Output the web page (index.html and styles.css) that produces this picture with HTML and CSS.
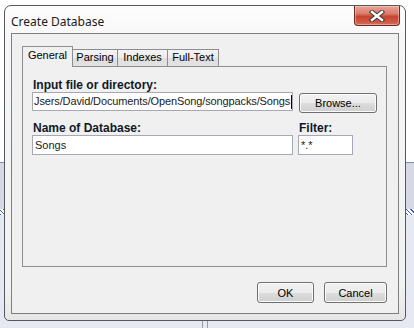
FILE: index.html
```html
<!DOCTYPE html>
<html lang="en">
<head>
    <meta charset="UTF-8">
    <meta name="viewport" content="width=device-width, initial-scale=1.0">
    <title>Create Database</title>
    <link rel="stylesheet" href="styles.css">
</head>
<body>
    <div class="window">
        <div class="titlebar">
            <span class="title">Create Database</span>
            <button class="close-btn" aria-label="Close">
                <svg width="16" height="12" viewBox="0 0 16 12">
                    <path d="M3 2 L13 10 M13 2 L3 10" stroke="#3c3c3c" stroke-width="4.4" stroke-linecap="square" fill="none"/>
                    <path d="M3 2 L13 10 M13 2 L3 10" stroke="#ffffff" stroke-width="2.4" stroke-linecap="square" fill="none"/>
                </svg>
            </button>
        </div>

        <div class="client">
            <div class="tabs">
                <div class="tab active">General</div>
                <div class="tab tab-parsing">Parsing</div>
                <div class="tab tab-indexes">Indexes</div>
                <div class="tab tab-fulltext">Full-Text</div>
            </div>

            <div class="panel">
                <div class="form">
                    <label class="lbl lbl-wide">Input file or directory:</label>
                    <div class="field field-path">
                        <span class="field-text">Jsers/David/Documents/OpenSong/songpacks/Songs</span><span class="caret"></span>
                    </div>
                    <button class="btn btn-browse">Browse...</button>

                    <label class="lbl lbl-name">Name of Database:</label>
                    <label class="lbl lbl-name">Filter:</label>
                    <div class="field">Songs</div>
                    <div class="field field-filter">*.*</div>
                </div>
            </div>

            <div class="actions">
                <button class="btn btn-ok">OK</button>
                <button class="btn btn-cancel">Cancel</button>
            </div>
        </div>
    </div>
</body>
</html>
```

FILE: styles.css
```css
* {
    margin: 0;
    padding: 0;
    box-sizing: border-box;
}

body {
    width: 414px;
    height: 328px;
    overflow: hidden;
    font-family: 'Liberation Sans', Arial, sans-serif;
    font-size: 11px;
    color: #000;
    background:
        linear-gradient(to right, transparent 202px, #9a9ca4 202px 203px, transparent 203px 207px, #9a9ca4 207px 208px, transparent 208px) 0 320px / 100% 8px no-repeat,
        repeating-linear-gradient(45deg, #3a55c4 0 1px, #ffffff 1px 3px) 0 209px / 100% 6px no-repeat,
        linear-gradient(to bottom, #ffffff 0 162px, #7c8cc4 162px 163px, #d6d9e4 163px 209px, #e6e9f1 209px);
}

/* window frame */

.window {
    margin: 5px 0 0 4px;
    width: 402px;
    height: 316px;
    border: 1px solid #555a60;
    border-radius: 7px 7px 5px 5px;
    background: linear-gradient(to bottom, #fdfdfd 0, #f6f6f6 40px, #f1f2f3 280px, #e6e6e6 100%);
    display: flex;
    flex-direction: column;
}

.titlebar {
    height: 27px;
    display: flex;
    align-items: flex-start;
    padding-left: 6px;
}

.title {
    font-family: 'Noto Sans', 'Open Sans', sans-serif;
    font-size: 12px;
    line-height: 16px;
    margin-top: 8px;
    color: #1a1a1a;
}

.close-btn {
    margin-left: auto;
    margin-right: 5px;
    width: 46px;
    height: 20px;
    border: 1px solid #6e2a22;
    border-top: none;
    border-radius: 0 0 4px 4px;
    background: linear-gradient(to bottom, #e9a597 0, #dc7c6a 40%, #c8442f 55%, #cf5a46 85%, #d87462 100%);
    box-shadow: inset 0 0 0 1px rgba(255, 220, 210, 0.45);
    display: flex;
    justify-content: center;
    align-items: center;
}

/* client area */

.client {
    flex: 1;
    margin: 0 6px 6px;
    border: 1px solid #7f7f7f;
    background: #f0f0f0;
    padding: 12px 11px 0 10px;
}

.tabs {
    display: flex;
    align-items: flex-end;
    height: 21px;
    position: relative;
    z-index: 1;
}

.tab {
    height: 17px;
    margin-bottom: 1px;
    border: 1px solid #8c8e94;
    border-bottom: none;
    margin-left: -1px;
    background: linear-gradient(to bottom, #f3f3f3, #ebebeb 50%, #dedede 51%, #e2e2e2);
    line-height: 15px;
    text-align: center;
}

.tab.active {
    height: 21px;
    margin-left: 0;
    margin-bottom: 0;
    width: 51px;
    background: #f0f0f0;
    line-height: 15px;
    padding-top: 1px;
    z-index: 2;
}

.tab-parsing { width: 46px; }
.tab-indexes { width: 51px; }
.tab-fulltext { width: 52px; }

.panel {
    height: 201px;
    margin-top: -1px;
    border: 1px solid #8c8e94;
    background: #f0f0f0;
    padding: 12px 0 0 9px;
}

.form {
    display: grid;
    grid-template-columns: 261px 79px;
    column-gap: 5px;
}

.lbl {
    font-weight: bold;
    font-size: 12px;
    line-height: 13px;
    color: #101828;
    padding-left: 1px;
}

.lbl-wide {
    grid-column: 1 / 3;
}

.lbl-name {
    margin-top: 9px;
}

.field {
    height: 20px;
    border: 1px solid #a6a9b2;
    background: #ffffff;
    padding-left: 2px;
    line-height: 18px;
    color: #1a1a1a;
    overflow: hidden;
    white-space: nowrap;
}

.field-path {
    height: 19px;
    line-height: 17px;
    display: flex;
    padding-left: 1px;
}

.field-text {
    letter-spacing: -0.12px;
}

.caret {
    display: inline-block;
    width: 1px;
    height: 14px;
    margin-top: 2px;
    margin-left: 1px;
    background: #000;
    flex: none;
}

.field-filter {
    width: 55px;
}

/* buttons */

.btn {
    height: 21px;
    border: 1px solid #707070;
    border-radius: 3px;
    background: linear-gradient(to bottom, #f2f2f2 0, #ebebeb 50%, #dddddd 51%, #cfcfcf 100%);
    box-shadow: inset 0 0 0 1px #fbfbfb;
    font-family: 'Liberation Sans', Arial, sans-serif;
    font-size: 11px;
    color: #000;
}

.btn-browse {
    width: 78px;
    margin: 1px 0 0 1px;
    height: 20px;
}

.actions {
    display: flex;
    justify-content: flex-end;
    gap: 10px;
    margin-top: 15px;
}

.btn-ok {
    width: 57px;
}

.btn-cancel {
    width: 63px;
}
```
